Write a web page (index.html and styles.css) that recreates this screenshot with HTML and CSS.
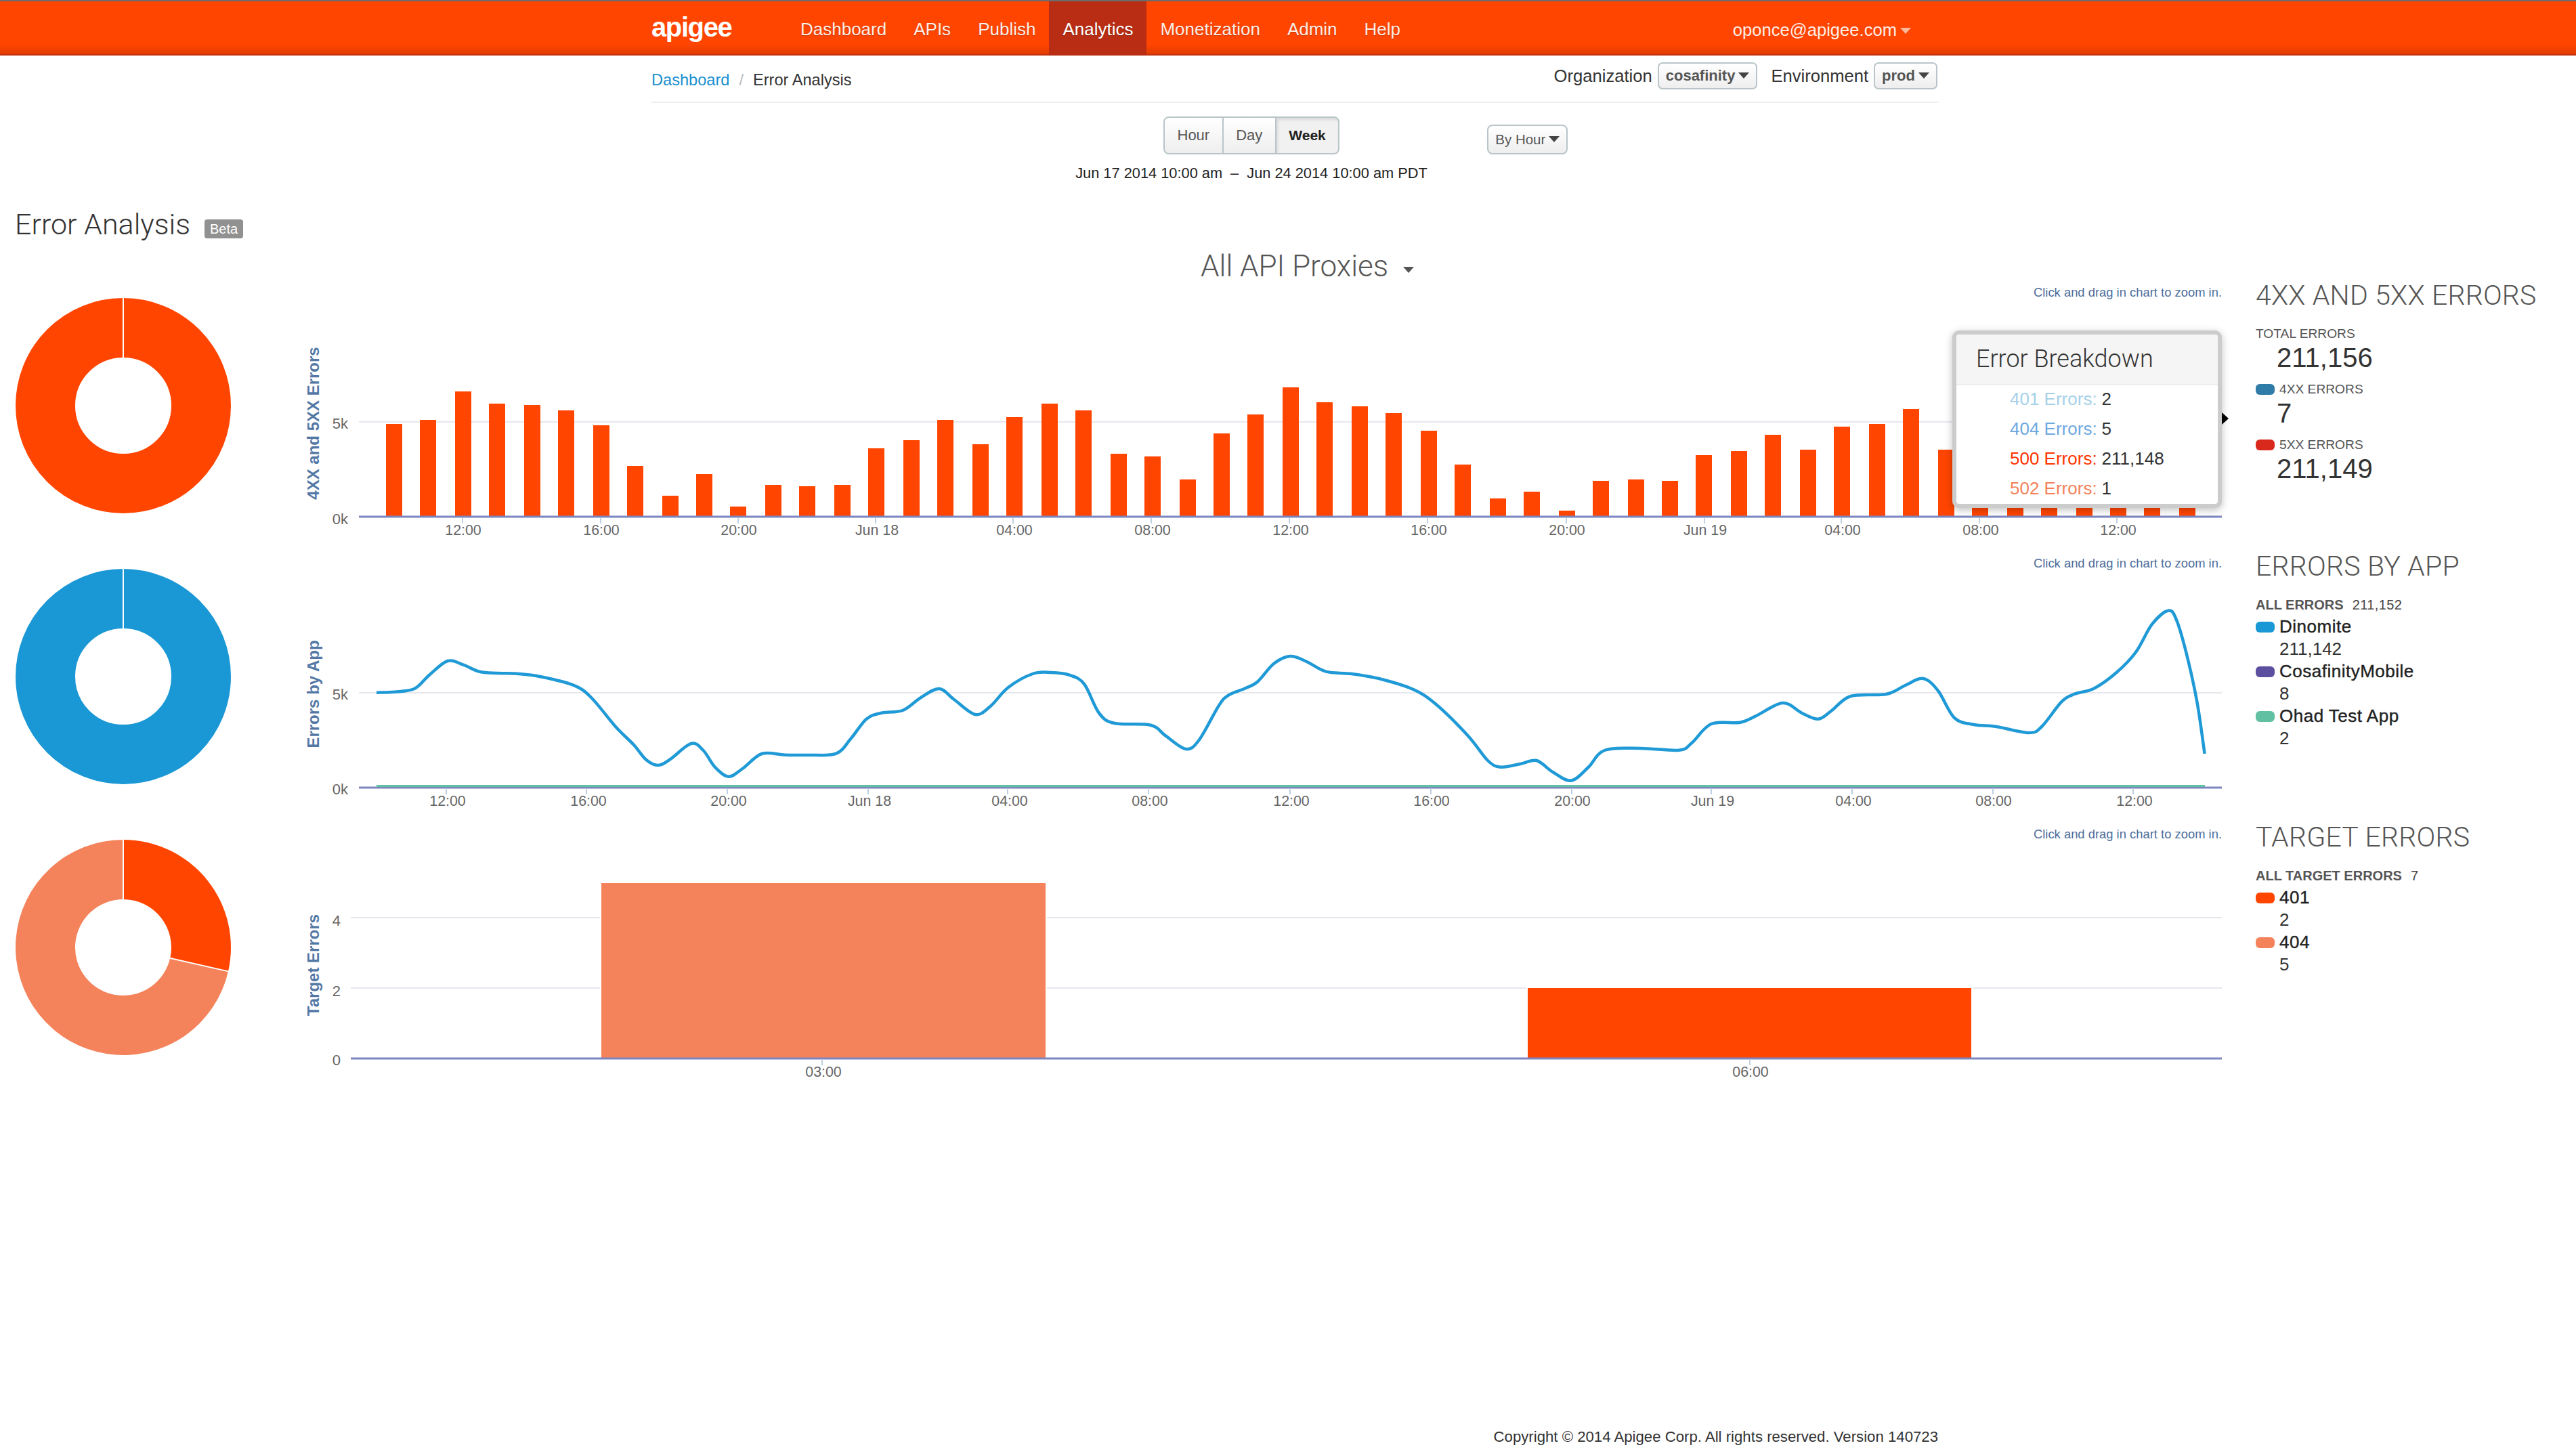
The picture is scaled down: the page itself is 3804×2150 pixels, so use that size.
FILE: index.html
```html
<!DOCTYPE html>
<html lang="en">
<head>
    <meta charset="UTF-8">
    <meta name="viewport" content="width=device-width, initial-scale=1.0">
    <title>Error Analysis</title>
    <link rel="stylesheet" href="styles.css">
</head>
<body>

    <div class="navbar">
        <div class="navbar-inner">
            <a class="logo">apigee</a>
            <ul class="nav">
                <li>Dashboard</li>
                <li>APIs</li>
                <li>Publish</li>
                <li class="active">Analytics</li>
                <li>Monetization</li>
                <li>Admin</li>
                <li>Help</li>
            </ul>
            <div class="user">oponce@apigee.com<span class="caret caret-light"></span></div>
        </div>
    </div>

    <div class="subheader">
        <div class="breadcrumb">
            <a>Dashboard</a><span class="divider">/</span><span>Error Analysis</span>
        </div>
        <div class="context">
            <label>Organization</label>
            <button class="btn btn-small">cosafinity<span class="caret"></span></button>
            <label class="context-env">Environment</label>
            <button class="btn btn-small">prod<span class="caret"></span></button>
        </div>
    </div>

    <div class="toolbar">
        <div class="btn-group">
            <button class="btn">Hour</button>
            <button class="btn">Day</button>
            <button class="btn active">Week</button>
        </div>
        <button class="btn btn-interval">By Hour<span class="caret"></span></button>
    </div>
    <div class="date-range">Jun 17 2014 10:00 am<span class="date-dash">–</span>Jun 24 2014 10:00 am PDT</div>

    <div class="page-title">
        <h1>Error Analysis</h1>
        <span class="badge">Beta</span>
    </div>

    <div class="proxy-select">All API Proxies<span class="caret caret-big"></span></div>

    <!-- 4xx / 5xx row -->
    <div class="row">
        <div class="donut">
            <svg width="320" height="320" viewBox="-160 -160 320 320">
                <circle r="115" fill="none" stroke="#ff4500" stroke-width="88"/>
                <line x1="0" y1="-160" x2="0" y2="-70" stroke="#fff" stroke-width="2"/>
            </svg>
        </div>
        <div class="chart-col">
            <div class="hint">Click and drag in chart to zoom in.</div>
            <svg id="chart-errors" class="chart" width="2861" height="371" viewBox="420 444 2861 371">
                <path class="grid" d="M530 623H3281"/>
                <g id="error-bars"></g>
                <path class="axis" d="M530 763H3281"/>
                <path class="tick" d="M683 764v9M887 764v9M1090 764v9M1293 764v9M1496 764v9M1700 764v9M1904 764v9M2108 764v9M2313 764v9M2517 764v9M2719 764v9M2923 764v9M3126 764v9"/>
                <text class="y-title" transform="translate(471 625) rotate(-90)">4XX and 5XX Errors</text>
                <text class="y-label" x="514" y="633">5k</text>
                <text class="y-label" x="514" y="774">0k</text>
                <g class="x-labels">
                    <text x="684" y="790">12:00</text>
                    <text x="888" y="790">16:00</text>
                    <text x="1091" y="790">20:00</text>
                    <text x="1295" y="790">Jun 18</text>
                    <text x="1498" y="790">04:00</text>
                    <text x="1702" y="790">08:00</text>
                    <text x="1906" y="790">12:00</text>
                    <text x="2110" y="790">16:00</text>
                    <text x="2314" y="790">20:00</text>
                    <text x="2518" y="790">Jun 19</text>
                    <text x="2721" y="790">04:00</text>
                    <text x="2925" y="790">08:00</text>
                    <text x="3128" y="790">12:00</text>
                </g>
            </svg>
            <div class="tooltip">
                <div class="tooltip-title">Error Breakdown</div>
                <div class="tooltip-body">
                    <div class="tooltip-row"><span class="c-401">401 Errors:</span><b>2</b></div>
                    <div class="tooltip-row"><span class="c-404">404 Errors:</span><b>5</b></div>
                    <div class="tooltip-row"><span class="c-500">500 Errors:</span><b>211,148</b></div>
                    <div class="tooltip-row"><span class="c-502">502 Errors:</span><b>1</b></div>
                </div>
            </div>
            <span class="tooltip-arrow"></span>
        </div>
        <div class="legend">
            <h3>4XX AND 5XX ERRORS</h3>
            <div class="stat-label first">TOTAL ERRORS</div>
            <div class="stat-value">211,156</div>
            <div class="stat-label"><i class="swatch" style="background:#2f7ca8"></i>4XX ERRORS</div>
            <div class="stat-value">7</div>
            <div class="stat-label"><i class="swatch" style="background:#d9291c"></i>5XX ERRORS</div>
            <div class="stat-value">211,149</div>
        </div>
    </div>

    <!-- by app row -->
    <div class="row">
        <div class="donut">
            <svg width="320" height="320" viewBox="-160 -160 320 320">
                <circle r="115" fill="none" stroke="#1a97d5" stroke-width="88"/>
                <line x1="0" y1="-160" x2="0" y2="-70" stroke="#fff" stroke-width="2"/>
            </svg>
        </div>
        <div class="chart-col">
            <div class="hint">Click and drag in chart to zoom in.</div>
            <svg id="chart-apps" class="chart" width="2861" height="371" viewBox="420 844 2861 371">
                <path class="grid" d="M530 1023H3281"/>
                <path class="axis" d="M530 1163H3281"/>
                <path class="tick" d="M659 1164v9M866 1164v9M1074 1164v9M1282 1164v9M1488 1164v9M1696 1164v9M1905 1164v9M2113 1164v9M2321 1164v9M2527 1164v9M2735 1164v9M2943 1164v9M3150 1164v9"/>
                <path d="M556 1160.5H3256" fill="none" stroke="#62c0a2" stroke-width="3"/>
                <path id="app-line" d="" fill="none" stroke="#1f9ad6" stroke-width="4.5" stroke-linejoin="round"/>
                <text class="y-title" transform="translate(471 1025) rotate(-90)">Errors by App</text>
                <text class="y-label" x="514" y="1033">5k</text>
                <text class="y-label" x="514" y="1173">0k</text>
                <g class="x-labels">
                    <text x="661" y="1190">12:00</text>
                    <text x="869" y="1190">16:00</text>
                    <text x="1076" y="1190">20:00</text>
                    <text x="1284" y="1190">Jun 18</text>
                    <text x="1491" y="1190">04:00</text>
                    <text x="1698" y="1190">08:00</text>
                    <text x="1907" y="1190">12:00</text>
                    <text x="2114" y="1190">16:00</text>
                    <text x="2322" y="1190">20:00</text>
                    <text x="2529" y="1190">Jun 19</text>
                    <text x="2737" y="1190">04:00</text>
                    <text x="2944" y="1190">08:00</text>
                    <text x="3152" y="1190">12:00</text>
                </g>
            </svg>
        </div>
        <div class="legend">
            <h3>ERRORS BY APP</h3>
            <div class="stat-label first"><b>ALL ERRORS</b><span class="stat-total">211,152</span></div>
            <div class="legend-list">
                <div class="legend-name"><i class="swatch" style="background:#1a97d5"></i>Dinomite</div>
                <div class="legend-num">211,142</div>
                <div class="legend-name"><i class="swatch" style="background:#5c4fa0"></i>CosafinityMobile</div>
                <div class="legend-num">8</div>
                <div class="legend-name"><i class="swatch" style="background:#62c0a2"></i>Ohad Test App</div>
                <div class="legend-num">2</div>
            </div>
        </div>
    </div>

    <!-- target row -->
    <div class="row">
        <div class="donut">
            <svg width="320" height="320" viewBox="-160 -160 320 320">
                <path d="M0 -159A159 159 0 0 1 155 35.4L69.2 15.8A71 71 0 0 0 0 -71Z" fill="#ff4500"/>
                <path d="M155 35.4A159 159 0 1 1 0 -159L0 -71A71 71 0 1 0 69.2 15.8Z" fill="#f4825a"/>
                <path d="M0 -160V-70M155 35.4L69.2 15.8" fill="none" stroke="#fff" stroke-width="2"/>
            </svg>
        </div>
        <div class="chart-col">
            <div class="hint">Click and drag in chart to zoom in.</div>
            <svg class="chart" width="2861" height="371" viewBox="420 1244 2861 371">
                <path class="grid" d="M518 1355H3281M518 1459H3281"/>
                <rect x="886" y="1300" width="660" height="262" fill="#fff"/>
                <rect x="888" y="1304" width="656" height="258" fill="#f4825a"/>
                <rect x="2254" y="1454" width="660" height="108" fill="#fff"/>
                <rect x="2256" y="1459" width="655" height="103" fill="#ff4500"/>
                <path class="axis" d="M518 1563H3281"/>
                <path class="tick" d="M1214 1564v9M2584 1564v9"/>
                <text class="y-title" transform="translate(471 1425) rotate(-90)">Target Errors</text>
                <text class="y-label" x="503" y="1367">4</text>
                <text class="y-label" x="503" y="1471">2</text>
                <text class="y-label" x="503" y="1573">0</text>
                <g class="x-labels">
                    <text x="1216" y="1590">03:00</text>
                    <text x="2585" y="1590">06:00</text>
                </g>
            </svg>
        </div>
        <div class="legend">
            <h3>TARGET ERRORS</h3>
            <div class="stat-label first"><b>ALL TARGET ERRORS</b><span class="stat-total">7</span></div>
            <div class="legend-list">
                <div class="legend-name"><i class="swatch" style="background:#ff4500"></i>401</div>
                <div class="legend-num">2</div>
                <div class="legend-name"><i class="swatch" style="background:#f4825a"></i>404</div>
                <div class="legend-num">5</div>
            </div>
        </div>
    </div>

    <div class="footer">Copyright © 2014 Apigee Corp. All rights reserved. Version 140723</div>

    <script src="charts.js"></script>
</body>
</html>
```

FILE: styles.css
```css
body {
    font-family: "Liberation Sans", Arial, sans-serif;
    margin: 0;
    padding: 0;
    background-color: #fff;
    color: #333;
}

/* top bar */
.navbar {
    height: 78px;
    border-top: 2px solid #6b6b6b;
    border-bottom: 2px solid #c2330f;
    background: linear-gradient(#ff4500 82%, #e03c00);
}
.navbar-inner {
    display: flex;
    align-items: stretch;
    margin-left: 962px;
    width: 1900px;
    height: 80px;
}
.logo {
    width: 200px;
    font-size: 40px;
    font-weight: bold;
    letter-spacing: -1.4px;
    line-height: 76px;
    color: #fff;
}
.nav {
    display: flex;
    list-style: none;
    margin: 0;
    padding: 0;
}
.nav li {
    padding: 0 20px;
    font-size: 26px;
    line-height: 82px;
    color: #fdeee6;
    text-shadow: 0 1px 1px rgba(0, 0, 0, 0.25);
}
.nav li.active {
    background-color: #b82d14;
    color: #fff;
}
.user {
    margin-left: auto;
    padding-right: 40px;
    font-size: 25.6px;
    line-height: 84px;
    color: #fdeee6;
}
.caret {
    display: inline-block;
    width: 0;
    height: 0;
    margin-left: 5px;
    vertical-align: 3px;
    border-top: 9px solid #444;
    border-left: 8px solid transparent;
    border-right: 8px solid transparent;
}
.caret-light {
    border-top-color: #ffb79b;
}
.caret-big {
    margin-left: 22px;
    vertical-align: 5px;
    border-top-color: #555;
}

/* breadcrumb row */
.subheader {
    display: flex;
    justify-content: space-between;
    align-items: flex-start;
    box-sizing: border-box;
    margin-left: 962px;
    width: 1900px;
    height: 70px;
    border-bottom: 2px solid #eee;
}
.breadcrumb {
    margin-top: 24px;
    font-size: 23.6px;
    line-height: 24px;
}
.breadcrumb a {
    color: #1a8fd0;
}
.breadcrumb .divider {
    margin: 0 14px;
    color: #bbb;
}
.context {
    display: flex;
    align-items: center;
    margin-top: 10px;
    margin-right: 1px;
    font-size: 25.6px;
    color: #333;
}
.context label {
    margin-right: 8px;
}
.context .context-env {
    margin-left: 20px;
}

/* buttons */
.btn {
    box-sizing: border-box;
    height: 56px;
    padding: 0 18.5px;
    font-family: inherit;
    font-size: 22px;
    color: #555;
    background: linear-gradient(#fff, #eee);
    border: 2px solid #b9c5c9;
    border-radius: 8px;
}
.btn-small {
    height: 40px;
    padding: 0 10px;
    font-weight: bold;
    border-radius: 7px;
}
.btn-interval {
    height: 44px;
    padding: 0 10px;
    font-size: 20.5px;
}
.toolbar {
    display: flex;
    align-items: flex-end;
    gap: 218px;
    margin-top: 20px;
    padding-left: 1718px;
}
.btn-group {
    display: flex;
}
.btn-group .btn {
    border-radius: 0;
    border-left-width: 0;
}
.btn-group .btn:first-child {
    border-left-width: 2px;
    border-radius: 8px 0 0 8px;
}
.btn-group .btn:last-child {
    border-radius: 0 8px 8px 0;
}
.btn-group .btn.active {
    font-weight: bold;
    font-size: 21px;
    color: #222;
    background: #f1f1f1;
    box-shadow: inset 2px 3px 4px rgba(0, 0, 0, 0.1);
}
.date-range {
    width: 3696px;
    margin-top: 13px;
    font-size: 21.8px;
    line-height: 30px;
    text-align: center;
    color: #222;
}
.date-dash {
    margin: 0 12px;
}

/* titles, Roboto light stands in for the thin heading face */
.page-title {
    display: flex;
    align-items: flex-start;
    margin-top: 35px;
    padding-left: 22px;
}
h1 {
    margin: 0;
    font-family: Roboto, "Liberation Sans", sans-serif;
    font-size: 43px;
    font-weight: 300;
    line-height: 50px;
    color: #333;
}
.badge {
    margin: 18px 0 0 21px;
    padding: 0 8px;
    font-size: 20px;
    line-height: 28px;
    color: #fff;
    background-color: #919191;
    border-radius: 4px;
}
.proxy-select {
    margin-top: 15px;
    padding-left: 1773px;
    font-family: Roboto, "Liberation Sans", sans-serif;
    font-size: 44px;
    font-weight: 300;
    line-height: 44px;
    color: #555;
}

/* chart rows */
.row {
    display: grid;
    grid-template-columns: 420px 2861px 523px;
    height: 400px;
}
.donut {
    padding: 24px 0 0 22px;
}
.donut svg,
.chart {
    display: block;
}
.chart {
    overflow: visible;
}
.chart-col {
    position: relative;
}
.hint {
    margin-top: 5px;
    font-size: 18.4px;
    line-height: 24px;
    text-align: right;
    color: #4d6d9a;
}
.grid {
    fill: none;
    stroke: #e7e7ee;
    stroke-width: 2;
}
.axis {
    fill: none;
    stroke: #7c85bf;
    stroke-width: 3;
}
.tick {
    fill: none;
    stroke: #c0d0e0;
    stroke-width: 2;
}
.error-bar {
    fill: #ff4500;
}
.y-title {
    font-size: 24px;
    font-weight: bold;
    text-anchor: middle;
    fill: #5378a5;
}
.y-label {
    font-size: 22px;
    text-anchor: end;
    fill: #666;
}
.x-labels text {
    font-size: 21.4px;
    text-anchor: middle;
    fill: #666;
}

/* tooltip */
.tooltip {
    position: absolute;
    top: 73px;
    right: 0;
    box-sizing: border-box;
    width: 398px;
    height: 262px;
    background-color: #fff;
    border: 6px solid #ccc;
    border-radius: 10px;
    box-shadow: 0 3px 12px rgba(0, 0, 0, 0.25);
    overflow: hidden;
}
.tooltip-title {
    height: 73px;
    padding-left: 29px;
    font-family: Roboto, "Liberation Sans", sans-serif;
    font-size: 36px;
    font-weight: 300;
    line-height: 72px;
    color: #333;
    background-color: #f5f5f5;
    border-bottom: 2px solid #ededed;
}
.tooltip-body {
    margin-top: -2px;
}
.tooltip-row {
    display: flex;
    height: 44px;
    padding-left: 79px;
    font-size: 26px;
    line-height: 44px;
}
.tooltip-row b {
    margin-left: 7px;
    font-weight: normal;
    color: #333;
}
.c-401 { color: #a6d0e8; }
.c-404 { color: #6ea8e0; }
.c-500 { color: #ff3300; }
.c-502 { color: #f4815a; }
.tooltip-arrow {
    position: absolute;
    top: 194px;
    right: -10px;
    width: 0;
    height: 0;
    border-left: 10px solid #000;
    border-top: 9px solid transparent;
    border-bottom: 9px solid transparent;
}

/* legends */
.legend {
    padding-left: 50px;
}
h3 {
    margin: 0;
    font-family: Roboto, "Liberation Sans", sans-serif;
    font-size: 41px;
    font-weight: 300;
    line-height: 42px;
    letter-spacing: 0.2px;
    color: #555;
    white-space: nowrap;
}
.stat-label {
    display: flex;
    align-items: center;
    margin-top: 12px;
    font-size: 19.2px;
    line-height: 24px;
    color: #555;
}
.stat-label.first {
    margin-top: 24px;
}
.stat-label b {
    font-size: 20px;
}
.stat-total {
    margin-left: 13px;
    font-size: 20px;
    letter-spacing: 0.4px;
    color: #444;
}
.stat-value {
    padding-left: 31px;
    font-size: 40px;
    line-height: 46px;
    color: #333;
}
.swatch {
    display: inline-block;
    width: 28px;
    height: 16px;
    margin-right: 7px;
    border-radius: 6px;
}
.legend-list {
    margin-top: 4px;
    font-size: 26px;
    line-height: 33px;
    color: #222;
}
.legend-name {
    letter-spacing: 0.5px;
    -webkit-text-stroke: 0.4px #222;
}
.legend-num {
    padding-left: 35px;
    color: #333;
}

.footer {
    margin-top: 492px;
    margin-left: 962px;
    width: 1900px;
    font-size: 22.2px;
    line-height: 30px;
    text-align: right;
    color: #333;
}
```

FILE: charts.js
```js
// bar lefts and tops for the 4xx/5xx chart, in page pixels
const barX = [570, 620, 672, 722, 774, 824, 876, 926, 978, 1028, 1078, 1130, 1180, 1232, 1282, 1334, 1384, 1436, 1486, 1538, 1588, 1640, 1690, 1742, 1792, 1842, 1894, 1944, 1996, 2046, 2098, 2148, 2200, 2250, 2302, 2352, 2404, 2454, 2504, 2556, 2606, 2658, 2708, 2760, 2810, 2862, 2912, 2964, 3014, 3066, 3116, 3166, 3218];
const barY = [626, 620, 578, 596, 598, 606, 628, 688, 732, 700, 748, 716, 718, 716, 662, 650, 620, 656, 616, 596, 606, 670, 674, 708, 640, 612, 572, 594, 600, 610, 636, 686, 736, 726, 754, 710, 708, 710, 672, 666, 642, 664, 630, 626, 604, 664, 700, 700, 700, 700, 700, 700, 700];

const bars = document.getElementById("error-bars");
barX.forEach((x, i) => {
    const rect = document.createElementNS("http://www.w3.org/2000/svg", "rect");
    rect.setAttribute("class", "error-bar");
    rect.setAttribute("x", x);
    rect.setAttribute("y", barY[i]);
    rect.setAttribute("width", 24);
    rect.setAttribute("height", 762 - barY[i]);
    bars.appendChild(rect);
});

// points along the Dinomite line
const pts = [
    [556, 1022.7], [583, 1021.7], [612.5, 1016.7], [634, 996.7], [661, 976], [684, 981.7], [708, 991.7], [735, 994], [766, 995], [797, 999],
    [846.5, 1011.7], [873, 1030], [909, 1073], [936, 1100], [954, 1121.7], [971.5, 1130], [989, 1121.7], [1020.5, 1098], [1038.5, 1108], [1056, 1133],
    [1076, 1146.7], [1096.5, 1135], [1125, 1113], [1159, 1114.7], [1195, 1115], [1235, 1112.7], [1257, 1090], [1279.5, 1061.7], [1302, 1052.7], [1333, 1049],
    [1360, 1030], [1387, 1017], [1409, 1033], [1440, 1055], [1462.5, 1043], [1489, 1015], [1525, 995], [1552, 993], [1579, 996.7], [1601, 1010],
    [1623, 1053], [1646, 1068], [1699, 1070.7], [1721.5, 1086.7], [1751, 1106], [1770.5, 1093], [1800, 1041.7], [1814, 1026.7], [1838, 1016.7], [1857, 1006.7],
    [1881, 980], [1905, 969], [1929, 976.7], [1958, 991.7], [1996, 995], [2039, 1002.7], [2087, 1018], [2120.6, 1040], [2168, 1086.7], [2197, 1123],
    [2216, 1132.7], [2245, 1128], [2269, 1123], [2293, 1140], [2320, 1152.7], [2345.5, 1133], [2369.5, 1108], [2422, 1105], [2479.5, 1107.7], [2498.6, 1096.7],
    [2527, 1069], [2570, 1066.7], [2594, 1056.7], [2632.6, 1038], [2661, 1053], [2685, 1061.7], [2704, 1050], [2733, 1028], [2785.7, 1025], [2814, 1011.7],
    [2840, 1002], [2862, 1020], [2886, 1060], [2915, 1070], [2948, 1073], [2996, 1082], [3015, 1073], [3044, 1036.7], [3063, 1025], [3092, 1016.7],
    [3125.5, 993], [3154, 963], [3178, 921.7], [3202, 901.7], [3214.5, 916.7], [3230.7, 973], [3245, 1040], [3255.6, 1113]
];

// catmull-rom through the points
let d = "M" + pts[0][0] + " " + pts[0][1];
for (let i = 0; i < pts.length - 1; i++) {
    const p0 = pts[Math.max(i - 1, 0)];
    const p1 = pts[i];
    const p2 = pts[i + 1];
    const p3 = pts[Math.min(i + 2, pts.length - 1)];
    const c1x = p1[0] + (p2[0] - p0[0]) / 6;
    const c1y = p1[1] + (p2[1] - p0[1]) / 6;
    const c2x = p2[0] - (p3[0] - p1[0]) / 6;
    const c2y = p2[1] - (p3[1] - p1[1]) / 6;
    d += "C" + c1x + " " + c1y + " " + c2x + " " + c2y + " " + p2[0] + " " + p2[1];
}
document.getElementById("app-line").setAttribute("d", d);
```
